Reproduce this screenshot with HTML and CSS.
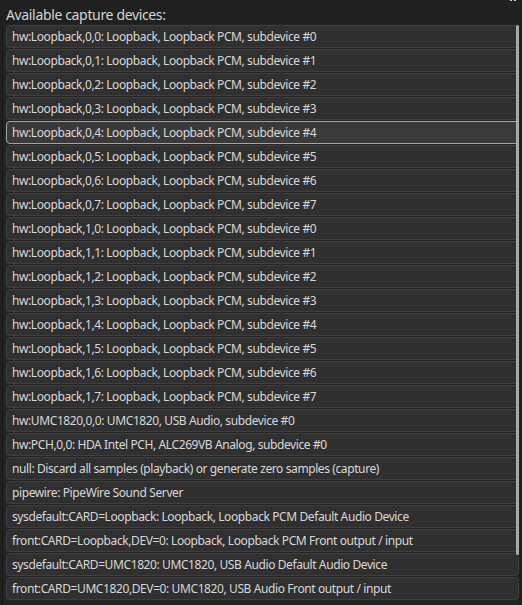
FILE: index.html
```html
<!DOCTYPE html>
<html>
<head>
<meta charset="utf-8">
<link rel="stylesheet" href="styles.css">
</head>
<body>
<div class="window">
  <div class="header">
    <span class="title">Available capture devices:</span>
    <span class="corner"><i></i><i></i></span>
  </div>
  <div class="listbox">
    <ul class="list">
      <li class="item">hw:Loopback,0,0: Loopback, Loopback PCM, subdevice #0</li>
      <li class="item">hw:Loopback,0,1: Loopback, Loopback PCM, subdevice #1</li>
      <li class="item">hw:Loopback,0,2: Loopback, Loopback PCM, subdevice #2</li>
      <li class="item">hw:Loopback,0,3: Loopback, Loopback PCM, subdevice #3</li>
      <li class="item selected">hw:Loopback,0,4: Loopback, Loopback PCM, subdevice #4</li>
      <li class="item">hw:Loopback,0,5: Loopback, Loopback PCM, subdevice #5</li>
      <li class="item">hw:Loopback,0,6: Loopback, Loopback PCM, subdevice #6</li>
      <li class="item">hw:Loopback,0,7: Loopback, Loopback PCM, subdevice #7</li>
      <li class="item">hw:Loopback,1,0: Loopback, Loopback PCM, subdevice #0</li>
      <li class="item">hw:Loopback,1,1: Loopback, Loopback PCM, subdevice #1</li>
      <li class="item">hw:Loopback,1,2: Loopback, Loopback PCM, subdevice #2</li>
      <li class="item">hw:Loopback,1,3: Loopback, Loopback PCM, subdevice #3</li>
      <li class="item">hw:Loopback,1,4: Loopback, Loopback PCM, subdevice #4</li>
      <li class="item">hw:Loopback,1,5: Loopback, Loopback PCM, subdevice #5</li>
      <li class="item">hw:Loopback,1,6: Loopback, Loopback PCM, subdevice #6</li>
      <li class="item">hw:Loopback,1,7: Loopback, Loopback PCM, subdevice #7</li>
      <li class="item">hw:UMC1820,0,0: UMC1820, USB Audio, subdevice #0</li>
      <li class="item">hw:PCH,0,0: HDA Intel PCH, ALC269VB Analog, subdevice #0</li>
      <li class="item">null: Discard all samples (playback) or generate zero samples (capture)</li>
      <li class="item">pipewire: PipeWire Sound Server</li>
      <li class="item">sysdefault:CARD=Loopback: Loopback, Loopback PCM Default Audio Device</li>
      <li class="item">front:CARD=Loopback,DEV=0: Loopback, Loopback PCM Front output / input</li>
      <li class="item">sysdefault:CARD=UMC1820: UMC1820, USB Audio Default Audio Device</li>
      <li class="item">front:CARD=UMC1820,DEV=0: UMC1820, USB Audio Front output / input</li>
    </ul>
    <div class="scrollbar"></div>
  </div>
</div>
</body>
</html>
```
FILE: styles.css
```css
html, body {
  margin: 0;
  padding: 0;
  background: #202020;
  overflow: hidden;
}
body {
  width: 522px;
  height: 605px;
  font-family: "Noto Sans", "Open Sans", sans-serif;
  color: #d8d8d8;
}
.window {
  display: flex;
  flex-direction: column;
  height: 605px;
}
.header {
  position: relative;
  height: 24px;
  padding-left: 6px;
  display: flex;
  align-items: flex-end;
}
.title {
  font-size: 14px;
  line-height: 18px;
  letter-spacing: -0.35px;
  color: #d4d4d4;
}
.corner {
  position: absolute;
  top: -2px;
  right: 6px;
  display: flex;
  gap: 2px;
}
.corner i {
  display: block;
  width: 2px;
  height: 3px;
  background: #cfcfcf;
}
.listbox {
  position: relative;
  flex: 1;
  margin-left: 2px;
  margin-right: 3px;
  border-left: 1px solid #161616;
  padding: 1px 0 0 3px;
  background: #242424;
}
.list {
  list-style: none;
  margin: 0;
  padding: 0;
  display: flex;
  flex-direction: column;
  gap: 1px;
}
.item {
  height: 21px;
  line-height: 22px;
  border: 1px solid #3f3f3f;
  border-radius: 4px;
  background: #303030;
  padding-left: 5px;
  font-size: 12px;
  letter-spacing: -0.4px;
  white-space: nowrap;
  overflow: hidden;
}
.item.selected {
  background: #3a3a3a;
  border-color: #a4a4a4;
}
.scrollbar {
  position: absolute;
  top: 1px;
  right: 0;
  width: 3px;
  height: 530px;
  border-radius: 2px;
  background: #a8a8a8;
}
```
